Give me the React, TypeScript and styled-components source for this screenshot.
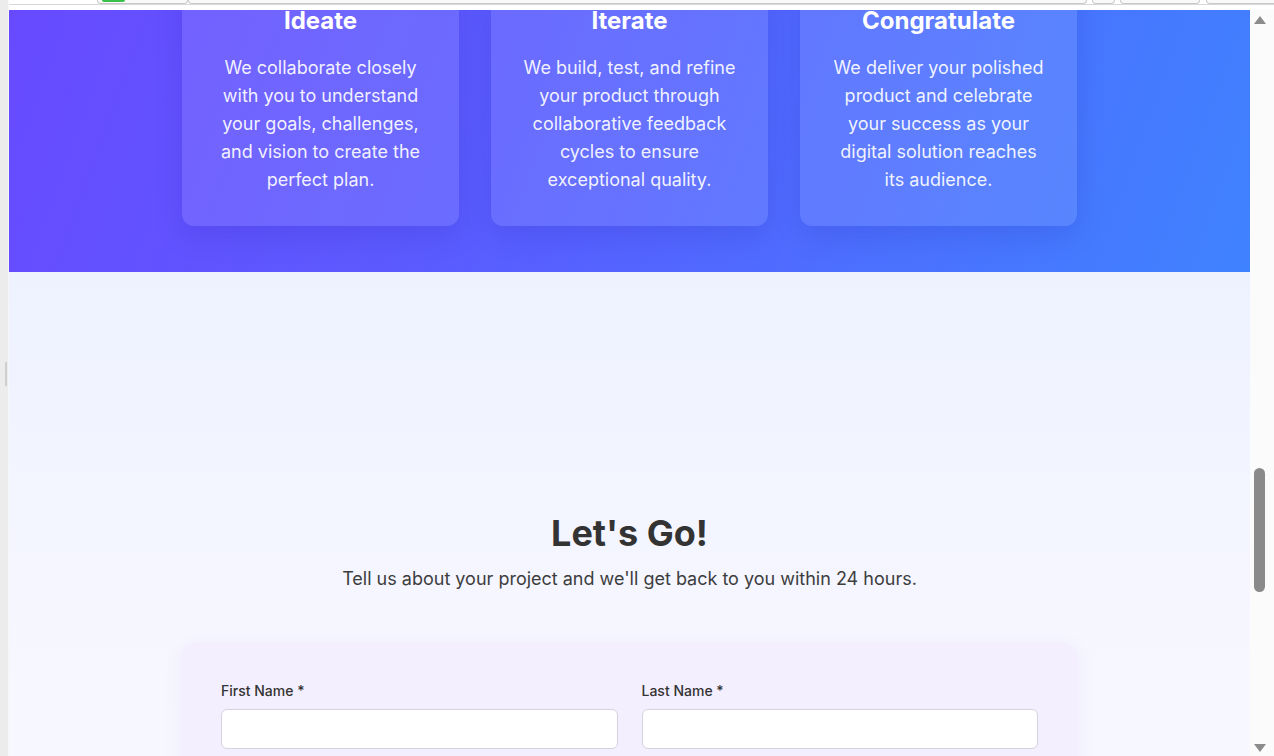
import { useEffect, useRef } from "react";
import styled, { createGlobalStyle } from "styled-components";

const GlobalStyle = createGlobalStyle`
  html, body {
    margin: 0;
    padding: 0;
    height: 100%;
    overflow: hidden;
    font-family: Inter, "Noto Sans", sans-serif;
  }
  #root {
    height: 100%;
  }
  * {
    box-sizing: border-box;
  }
`;

const steps = [
  {
    title: "Ideate",
    text: "We collaborate closely with you to understand your goals, challenges, and vision to create the perfect plan.",
  },
  {
    title: "Iterate",
    text: "We build, test, and refine your product through collaborative feedback cycles to ensure exceptional quality.",
  },
  {
    title: "Congratulate",
    text: "We deliver your polished product and celebrate your success as your digital solution reaches its audience.",
  },
];

export const App = () => {
  const scrollerRef = useRef<HTMLDivElement>(null);
  const titleRef = useRef<HTMLHeadingElement>(null);

  // page is scrolled so the step titles sit just under the toolbar
  useEffect(() => {
    const scroller = scrollerRef.current;
    const title = titleRef.current;
    if (!scroller || !title) return;
    const offset =
      title.getBoundingClientRect().top - scroller.getBoundingClientRect().top;
    scroller.scrollTop = offset + 5;
  }, []);

  return (
    <>
      <GlobalStyle />
      <Frame>
        <SideStrip>
          <SideHandle />
        </SideStrip>
        <Window>
          <Toolbar>
            <ToolRow>
              <ToolBox $left={88} $width={91}>
                <GreenPill />
              </ToolBox>
              <ToolBox $left={0} $width={899} />
              <ToolBox $left={5} $width={23} />
              <ToolBox $left={5} $width={80} />
              <ToolBox $left={6} $width={80} />
            </ToolRow>
          </Toolbar>
          <Body>
            <Scroller ref={scrollerRef}>
              <Hero>
                <HeroTitle>Our Process</HeroTitle>
                <HeroLead>Simple steps from idea to launch.</HeroLead>
                <StepGrid>
                  {steps.map((step, i) => (
                    <StepCard key={step.title}>
                      <StepIcon>{i + 1}</StepIcon>
                      <StepTitle ref={i === 0 ? titleRef : undefined}>
                        {step.title}
                      </StepTitle>
                      <StepText>{step.text}</StepText>
                    </StepCard>
                  ))}
                </StepGrid>
              </Hero>
              <Contact>
                <ContactTitle>Let's Go!</ContactTitle>
                <ContactLead>
                  Tell us about your project and we'll get back to you within 24
                  hours.
                </ContactLead>
                <FormCard>
                  <FieldRow>
                    <Field>
                      <Label>First Name *</Label>
                      <Input type="text" />
                    </Field>
                    <Field>
                      <Label>Last Name *</Label>
                      <Input type="text" />
                    </Field>
                  </FieldRow>
                  <FieldRow>
                    <Field>
                      <Label>Email *</Label>
                      <Input type="email" />
                    </Field>
                    <Field>
                      <Label>Company</Label>
                      <Input type="text" />
                    </Field>
                  </FieldRow>
                </FormCard>
              </Contact>
            </Scroller>
            <ScrollTrack>
              <Arrow $up />
              <ThumbArea>
                <Thumb />
              </ThumbArea>
              <Arrow />
            </ScrollTrack>
          </Body>
        </Window>
      </Frame>
    </>
  );
};

export default App;

const Frame = styled.div`
  display: flex;
  height: 100vh;
  background: #ffffff;
`;

const SideStrip = styled.div`
  width: 9px;
  flex-shrink: 0;
  background: #ececec;
  border-right: 1px solid #f6f6f6;
  display: flex;
  align-items: center;
  padding-left: 5px;
  padding-bottom: 8px;
`;

const SideHandle = styled.div`
  width: 2px;
  height: 24px;
  background: #cfcfcf;
`;

const Window = styled.div`
  flex: 1;
  display: flex;
  flex-direction: column;
  min-width: 0;
`;

const Toolbar = styled.div`
  height: 10px;
  flex-shrink: 0;
  background: #ffffff;
`;

const ToolRow = styled.div`
  display: flex;
  height: 5px;
  overflow: hidden;
  border-bottom: 1px solid #d8d8d8;
`;

const ToolBox = styled.div<{ $left: number; $width: number }>`
  flex-shrink: 0;
  margin-left: ${(p) => p.$left}px;
  width: ${(p) => p.$width}px;
  height: 4px;
  border: 1px solid #c9c9c9;
  border-top: none;
  border-radius: 0 0 5px 5px;
  background: #f9f9f9;
  display: flex;
  padding-left: 4px;
`;

const GreenPill = styled.div`
  width: 23px;
  height: 2px;
  background: #3cc04c;
  border-radius: 0 0 3px 3px;
`;

const Body = styled.div`
  flex: 1;
  display: flex;
  min-height: 0;
`;

const Scroller = styled.div`
  flex: 1;
  overflow-y: auto;
  scrollbar-width: none;
  &::-webkit-scrollbar {
    display: none;
  }
`;

const ScrollTrack = styled.div`
  width: 24px;
  flex-shrink: 0;
  background: #fbfbfb;
  display: flex;
  flex-direction: column;
  align-items: flex-start;
  padding: 6px 0 4px 4px;
`;

const Arrow = styled.div<{ $up?: boolean }>`
  width: 0;
  height: 0;
  border-left: 6px solid transparent;
  border-right: 6px solid transparent;
  ${(p) =>
    p.$up
      ? "border-bottom: 8px solid #8c8c8c;"
      : "border-top: 8px solid #8c8c8c;"}
`;

const ThumbArea = styled.div`
  flex: 1;
  padding-top: 444px;
`;

const Thumb = styled.div`
  width: 11px;
  height: 124px;
  border-radius: 6px;
  background: #8a8a8a;
`;

const Hero = styled.section`
  background: linear-gradient(110deg, #6b46ff 0%, #5a5cff 45%, #3f82ff 100%);
  padding: 80px 0 46px;
  display: flex;
  flex-direction: column;
  align-items: center;
  color: #ffffff;
`;

const HeroTitle = styled.h2`
  margin: 0 0 16px;
  font-size: 40px;
  font-weight: 700;
`;

const HeroLead = styled.p`
  margin: 0 0 64px;
  font-size: 20px;
  opacity: 0.9;
`;

const StepGrid = styled.div`
  display: grid;
  grid-template-columns: repeat(3, 277px);
  gap: 32px;
`;

const StepCard = styled.div`
  background: rgba(255, 255, 255, 0.1);
  border-radius: 12px;
  padding: 32px 30px;
  text-align: center;
  box-shadow: 0 10px 30px rgba(20, 10, 120, 0.12);
  display: flex;
  flex-direction: column;
  align-items: center;
`;

const StepIcon = styled.div`
  width: 64px;
  height: 64px;
  border-radius: 50%;
  background: rgba(255, 255, 255, 0.2);
  display: flex;
  align-items: center;
  justify-content: center;
  font-size: 24px;
  font-weight: 700;
  margin-bottom: 24px;
`;

const StepTitle = styled.h3`
  margin: 0 0 17px;
  font-size: 24px;
  line-height: 32px;
  font-weight: 700;
  color: #ffffff;
`;

const StepText = styled.p`
  margin: 0;
  font-size: 18px;
  line-height: 28px;
  font-weight: 400;
  color: rgba(255, 255, 255, 0.92);
`;

const Contact = styled.section`
  background: linear-gradient(180deg, #eef2ff 0%, #f7f7ff 60%, #f8f8ff 100%);
  padding: 240px 0 80px;
  display: flex;
  flex-direction: column;
  align-items: center;
`;

const ContactTitle = styled.h2`
  margin: 0 0 10px;
  font-size: 36px;
  line-height: 1.2;
  font-weight: 700;
  color: #333333;
`;

const ContactLead = styled.p`
  margin: 0 0 48px;
  font-size: 18px;
  line-height: 1.6;
  color: #3d3d3d;
`;

const FormCard = styled.form`
  width: 897px;
  background: #f3effe;
  border-radius: 16px;
  padding: 40px;
  box-shadow: 0 4px 20px rgba(90, 70, 200, 0.06);
  display: flex;
  flex-direction: column;
  gap: 24px;
`;

const FieldRow = styled.div`
  display: grid;
  grid-template-columns: 1fr 1fr;
  gap: 24px;
`;

const Field = styled.div`
  display: flex;
  flex-direction: column;
`;

const Label = styled.label`
  font-size: 14px;
  line-height: 18px;
  font-weight: 500;
  color: #333333;
  margin-bottom: 9px;
`;

const Input = styled.input`
  height: 40px;
  border: 1px solid #d5d2e2;
  border-radius: 6px;
  background: #ffffff;
  font-family: inherit;
  font-size: 15px;
  padding: 0 12px;
`;
